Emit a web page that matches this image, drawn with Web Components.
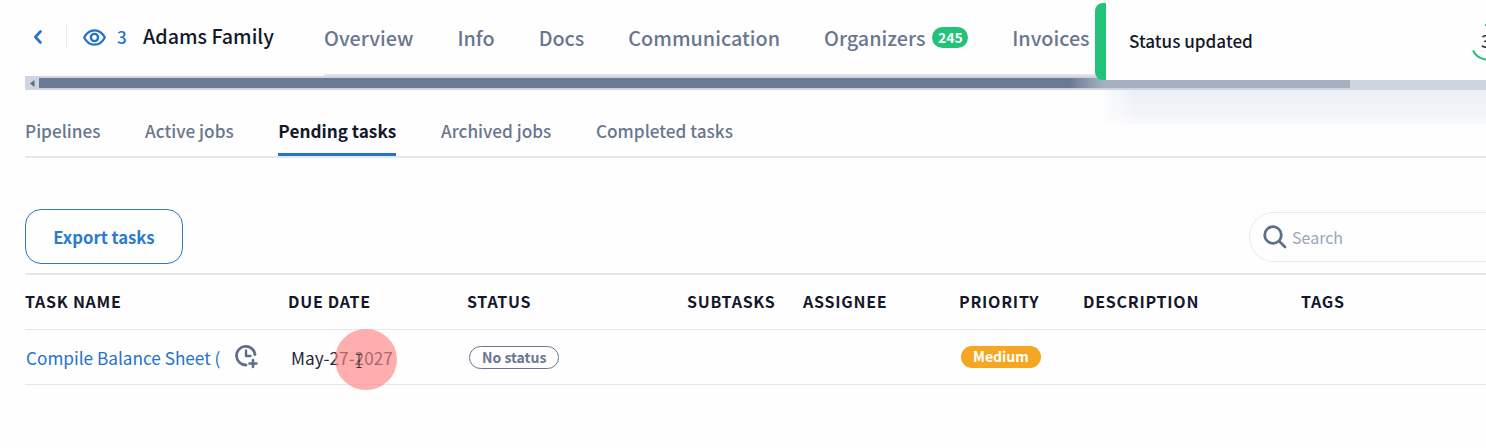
<!DOCTYPE html>
<html>
<head>
<meta charset="utf-8">
<title>Adams Family</title>
<style>
  html, body { margin: 0; padding: 0; background: #fefefe; overflow: hidden; }
  body { width: 1486px; height: 448px; position: relative; font-family: "Noto Sans CJK SC", "Noto Sans", sans-serif; }
</style>
</head>
<body>
<job-header></job-header>
<sub-tabs></sub-tabs>
<task-toolbar></task-toolbar>
<task-table></task-table>
<status-toast>Status updated</status-toast>
<click-mark></click-mark>

<script>
const FONT = '"Noto Sans CJK SC", "Noto Sans", sans-serif';

class JobHeader extends HTMLElement {
  constructor() {
    super();
    this.attachShadow({ mode: "open" });
  }
  connectedCallback() {
    this.shadowRoot.innerHTML = `
      <style>
        :host { display: block; font-family: ${FONT}; padding-left: 25px; }
        .bar { display: flex; align-items: center; height: 76px; white-space: nowrap; }
        .back { width: 42px; height: 25px; display: flex; align-items: center; padding-left: 6px; box-sizing: border-box; border-right: 1px solid #e6e9ef; margin-top: -5px; }
        .back svg { margin-top: 3px; display: block; }
        .eye { margin-left: 16px; margin-top: -2px; display: block; }
        .count { margin-left: 11px; width: 26px; margin-top: -4px; font-size: 17px; font-weight: 500; color: #2273c9; }
        .name { font-size: 19.7px; font-weight: 500; color: #14182b; margin-top: -6px; width: 181px; }
        nav { flex: 1; height: 76px; box-sizing: border-box; border-bottom: 2px solid #e0e4eb; display: flex; align-items: center; gap: 44px; font-size: 19.8px; font-weight: 500; color: #68778f; }
        nav span { display: inline-flex; align-items: center; }
        .badge { margin-left: 7px; background: #22c278; color: #fff; font-size: 14px; font-weight: 700; line-height: 21px; height: 21px; border-radius: 11px; padding: 0 5.5px; }
        .track { height: 14px; background: #ced4e0; display: flex; align-items: center; }
        .arrow { width: 14px; display: flex; justify-content: center; }
        .thumb { width: 1311px; height: 10px; background: linear-gradient(to right, #6b7a94 1030px, #a6afbf 1065px); }
      </style>
      <div class="bar">
        <div class="back">
          <svg width="12" height="16" viewBox="0 0 12 16"><path d="M9.5 2.5 4.3 8 9.5 13.5" fill="none" stroke="#2273c9" stroke-width="2.6" stroke-linecap="round" stroke-linejoin="round"/></svg>
        </div>
        <svg class="eye" width="23" height="17" viewBox="0 0 23 17"><path d="M1.2 8.5C3.4 4 7 1.3 11.5 1.3S19.6 4 21.8 8.5C19.6 13 16 15.7 11.5 15.7S3.4 13 1.2 8.5Z" fill="none" stroke="#2273c9" stroke-width="2.2"/><circle cx="11.5" cy="8.5" r="3.6" fill="none" stroke="#2273c9" stroke-width="2.4"/></svg>
        <span class="count">3</span>
        <span class="name">Adams Family</span>
        <nav>
          <span>Overview</span><span>Info</span><span>Docs</span><span>Communication</span>
          <span>Organizers<b class="badge">245</b></span><span>Invoices</span>
        </nav>
      </div>
      <div class="track">
        <div class="arrow"><svg width="5" height="7" viewBox="0 0 5 7"><path d="M4.5 0 0 3.5 4.5 7Z" fill="#5e6b80"/></svg></div>
        <div class="thumb"></div>
      </div>`;
  }
}
customElements.define("job-header", JobHeader);

class SubTabs extends HTMLElement {
  constructor() {
    super();
    this.attachShadow({ mode: "open" });
  }
  connectedCallback() {
    const tabs = ["Pipelines", "Active jobs", "Pending tasks", "Archived jobs", "Completed tasks"];
    this.shadowRoot.innerHTML = `
      <style>
        :host { display: block; font-family: ${FONT}; margin: 23px 0 0 25px; }
        .tabs { display: flex; gap: 44.7px; height: 43px; border-bottom: 2px solid #e3e7ee; }
        .tab { font-size: 17.2px; font-weight: 500; color: #68778f; line-height: 36px; }
        .on { color: #14182b; font-weight: 700; height: 40px; border-bottom: 3px solid #2273c9; }
      </style>
      <div class="tabs">${tabs.map((t) => `<div class="tab ${t === "Pending tasks" ? "on" : ""}">${t}</div>`).join("")}</div>`;
  }
}
customElements.define("sub-tabs", SubTabs);

class TaskToolbar extends HTMLElement {
  constructor() {
    super();
    this.attachShadow({ mode: "open" });
  }
  connectedCallback() {
    this.shadowRoot.innerHTML = `
      <style>
        :host { display: flex; justify-content: space-between; align-items: center; font-family: ${FONT}; margin: 51px 0 0 25px; height: 55px; }
        button { width: 158px; height: 55px; box-sizing: border-box; border: 1px solid #2e78c4; border-radius: 16px; background: transparent; color: #2b7ad0; font: 700 16.7px ${FONT}; padding: 0; }
        .search { width: 237px; height: 50px; margin-top: 1px; box-sizing: border-box; border: 1px solid #e8ebf0; border-right: 0; border-radius: 25px 0 0 25px; display: flex; align-items: center; gap: 5px; padding-left: 13px; color: #98a5ba; font-size: 16px; }
        svg { display: block; }
      </style>
      <button>Export tasks</button>
      <div class="search">
        <svg width="24" height="24" viewBox="0 0 24 24"><circle cx="10" cy="10" r="8.3" fill="none" stroke="#5f6f8a" stroke-width="2.8"/><path d="M16.5 16.5 22 22" stroke="#5f6f8a" stroke-width="2.8" stroke-linecap="round"/></svg>
        <span>Search</span>
      </div>`;
  }
}
customElements.define("task-toolbar", TaskToolbar);

class TaskTable extends HTMLElement {
  constructor() {
    super();
    this.attachShadow({ mode: "open" });
  }
  connectedCallback() {
    const cols = "263px 179px 220px 116px 156px 124px 218px 1fr";
    const heads = ["Task name", "Due date", "Status", "Subtasks", "Assignee", "Priority", "Description", "Tags"];
    this.shadowRoot.innerHTML = `
      <style>
        :host { display: block; font-family: ${FONT}; margin: 9px 0 0 25px; }
        .row { display: grid; grid-template-columns: ${cols}; align-items: center; }
        .head { height: 56px; box-sizing: border-box; padding-bottom: 2px; border-top: 2px solid #e3e7ee; font-size: 16px; font-weight: 700; letter-spacing: .75px; color: #14182b; text-transform: uppercase; }
        .body { height: 54px; border-top: 1px solid #e3e7ee; border-bottom: 1px solid #e3e7ee; font-size: 17.2px; }
        .task { display: flex; align-items: center; padding-left: 1px; color: #2273c9; }
        .name { width: 195px; white-space: nowrap; }
        .task svg { margin-left: 14px; display: block; }
        .date { padding-left: 3px; color: #23263a; }
        .pill { display: flex; align-items: center; }
        .status { margin-left: 2px; height: 23px; box-sizing: border-box; border: 1px solid #68778f; border-radius: 12px; padding: 0 12px; font-size: 14px; font-weight: 700; line-height: 20px; color: #68778f; }
        .prio { margin-left: 2px; height: 22px; border-radius: 11px; background: #f5a623; color: #fff; padding: 0 12px; font-size: 14px; font-weight: 700; line-height: 21px; }
      </style>
      <div class="row head">${heads.map((h) => `<div>${h}</div>`).join("")}</div>
      <div class="row body">
        <div class="task">
          <span class="name">Compile Balance Sheet (</span>
          <svg width="26" height="26" viewBox="0 0 26 26"><path d="M20 10.5A9.3 9.3 0 1 0 11 21" fill="none" stroke="#5f6f8a" stroke-width="2.8" stroke-linecap="round"/><path d="M11 6.5V12H15.5" fill="none" stroke="#5f6f8a" stroke-width="2.4" stroke-linecap="round" stroke-linejoin="round"/><path d="M18 16V23M14.5 19.5H21.5" stroke="#5f6f8a" stroke-width="2.6" stroke-linecap="round"/></svg>
        </div>
        <div class="date">May-27-2027</div>
        <div class="pill"><span class="status">No status</span></div>
        <div></div><div></div>
        <div class="pill"><span class="prio">Medium</span></div>
        <div></div><div></div>
      </div>`;
  }
}
customElements.define("task-table", TaskTable);

class StatusToast extends HTMLElement {
  constructor() {
    super();
    this.attachShadow({ mode: "open" });
  }
  connectedCallback() {
    this.shadowRoot.innerHTML = `
      <style>
        :host { position: absolute; left: 1095px; top: 3px; width: 391px; height: 77px; box-sizing: border-box; background: #fefefe; border-left: 11px solid #22c278; border-radius: 8px 0 0 8px; display: flex; align-items: center; padding: 0 0 3px 23px; font-family: ${FONT}; font-size: 17.1px; font-weight: 500; color: #14182b; }
        :host::after { content: ""; position: absolute; left: -6px; right: 0; top: 87px; height: 34px; background: linear-gradient(#eceff5, #f2f4f8 65%, #f8f9fb); -webkit-mask-image: linear-gradient(to right, transparent, #000 34px); mask-image: linear-gradient(to right, transparent, #000 34px); }
        .timer { position: absolute; left: 360px; top: 18px; display: block; overflow: hidden; }
      </style>
      <slot></slot>
      <svg class="timer" width="40" height="40" viewBox="0 0 40 40"><path d="M30 36A16 16 0 0 1 7 29.5" fill="none" stroke="#22c278" stroke-width="2"/><path d="M19 4A16 16 0 0 1 30 8" fill="none" stroke="#22c278" stroke-width="2"/><text x="15" y="27" font-size="17" font-weight="500" fill="#2a2f45">3</text></svg>`;
  }
}
customElements.define("status-toast", StatusToast);

class ClickMark extends HTMLElement {
  constructor() {
    super();
    this.attachShadow({ mode: "open" });
  }
  connectedCallback() {
    this.shadowRoot.innerHTML = `
      <style>
        :host { position: absolute; left: 335px; top: 329px; width: 62px; height: 61px; border-radius: 50%; background: rgba(255,130,130,.65); }
        svg { position: absolute; left: 19px; top: 24px; display: block; }
      </style>
      <svg width="10" height="16" viewBox="0 0 10 16"><path d="M2.5 1.5H7.5M5 1.5V14.5M2.5 14.5H7.5M3.5 8H6.5" fill="none" stroke="#333" stroke-width="1"/></svg>`;
  }
}
customElements.define("click-mark", ClickMark);
</script>
</body>
</html>
